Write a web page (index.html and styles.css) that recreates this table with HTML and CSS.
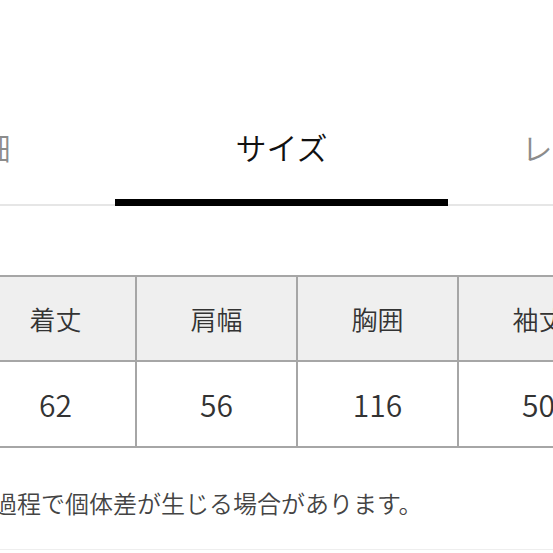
FILE: index.html
```html
<!DOCTYPE html>
<html lang="ja">
<head>
<meta charset="utf-8">
<title>サイズ</title>
<link rel="stylesheet" href="styles.css">
</head>
<body>
<div class="page">
  <nav class="tabs">
    <div class="tab">商品詳細</div>
    <div class="tab active">サイズ</div>
    <div class="tab">レビュー一覧</div>
  </nav>
  <div class="size-table">
    <div class="cell head">着丈</div>
    <div class="cell head">肩幅</div>
    <div class="cell head">胸囲</div>
    <div class="cell head">袖丈</div>
    <div class="cell body">62</div>
    <div class="cell body">56</div>
    <div class="cell body">116</div>
    <div class="cell body">50</div>
  </div>
  <p class="note">※製造過程で個体差が生じる場合があります。</p>
  <div class="divider"></div>
</div>
</body>
</html>
```

FILE: styles.css
```css
html, body {
  margin: 0;
  padding: 0;
  background: #fff;
  overflow: hidden;
}
.page {
  width: 553px;
  height: 553px;
  overflow: hidden;
  font-family: "Noto Sans CJK JP", "Noto Sans", sans-serif;
  font-weight: 350;
  padding-top: 100px;
  box-sizing: border-box;
}
.tabs {
  display: flex;
  margin-left: -218px;
  width: 1200px;
  border-bottom: 2px solid #e6e6e6;
}
.tab {
  flex: none;
  width: 333px;
  box-sizing: border-box;
  padding: 31px 0 42px;
  font-size: 31px;
  line-height: 31px;
  text-align: center;
  color: #8c8c8c;
  white-space: nowrap;
  position: relative;
}
.tab.active {
  color: #111;
}
.tab.active::after {
  content: "";
  position: absolute;
  left: 0;
  right: 0;
  bottom: -2px;
  height: 7px;
  background: #000;
}
.size-table {
  display: grid;
  grid-template-columns: repeat(4, 161px);
  grid-template-rows: 85px 86px;
  margin-top: 69px;
  margin-left: -26px;
  width: max-content;
  border-top: 2px solid #a6a6a6;
  border-left: 2px solid #a6a6a6;
}
.cell {
  box-sizing: border-box;
  border-right: 2px solid #a6a6a6;
  border-bottom: 2px solid #a6a6a6;
  display: flex;
  align-items: center;
  justify-content: center;
  color: #333;
}
.cell.head {
  background: #efefef;
  font-size: 26px;
}
.cell.body {
  background: #fff;
  font-size: 30px;
}
.note {
  margin: 40px 0 0 -79px;
  font-size: 24px;
  line-height: 30px;
  color: #444;
  white-space: nowrap;
}
.divider {
  margin-top: 31px;
  height: 1px;
  background: #eeeeee;
}
```
